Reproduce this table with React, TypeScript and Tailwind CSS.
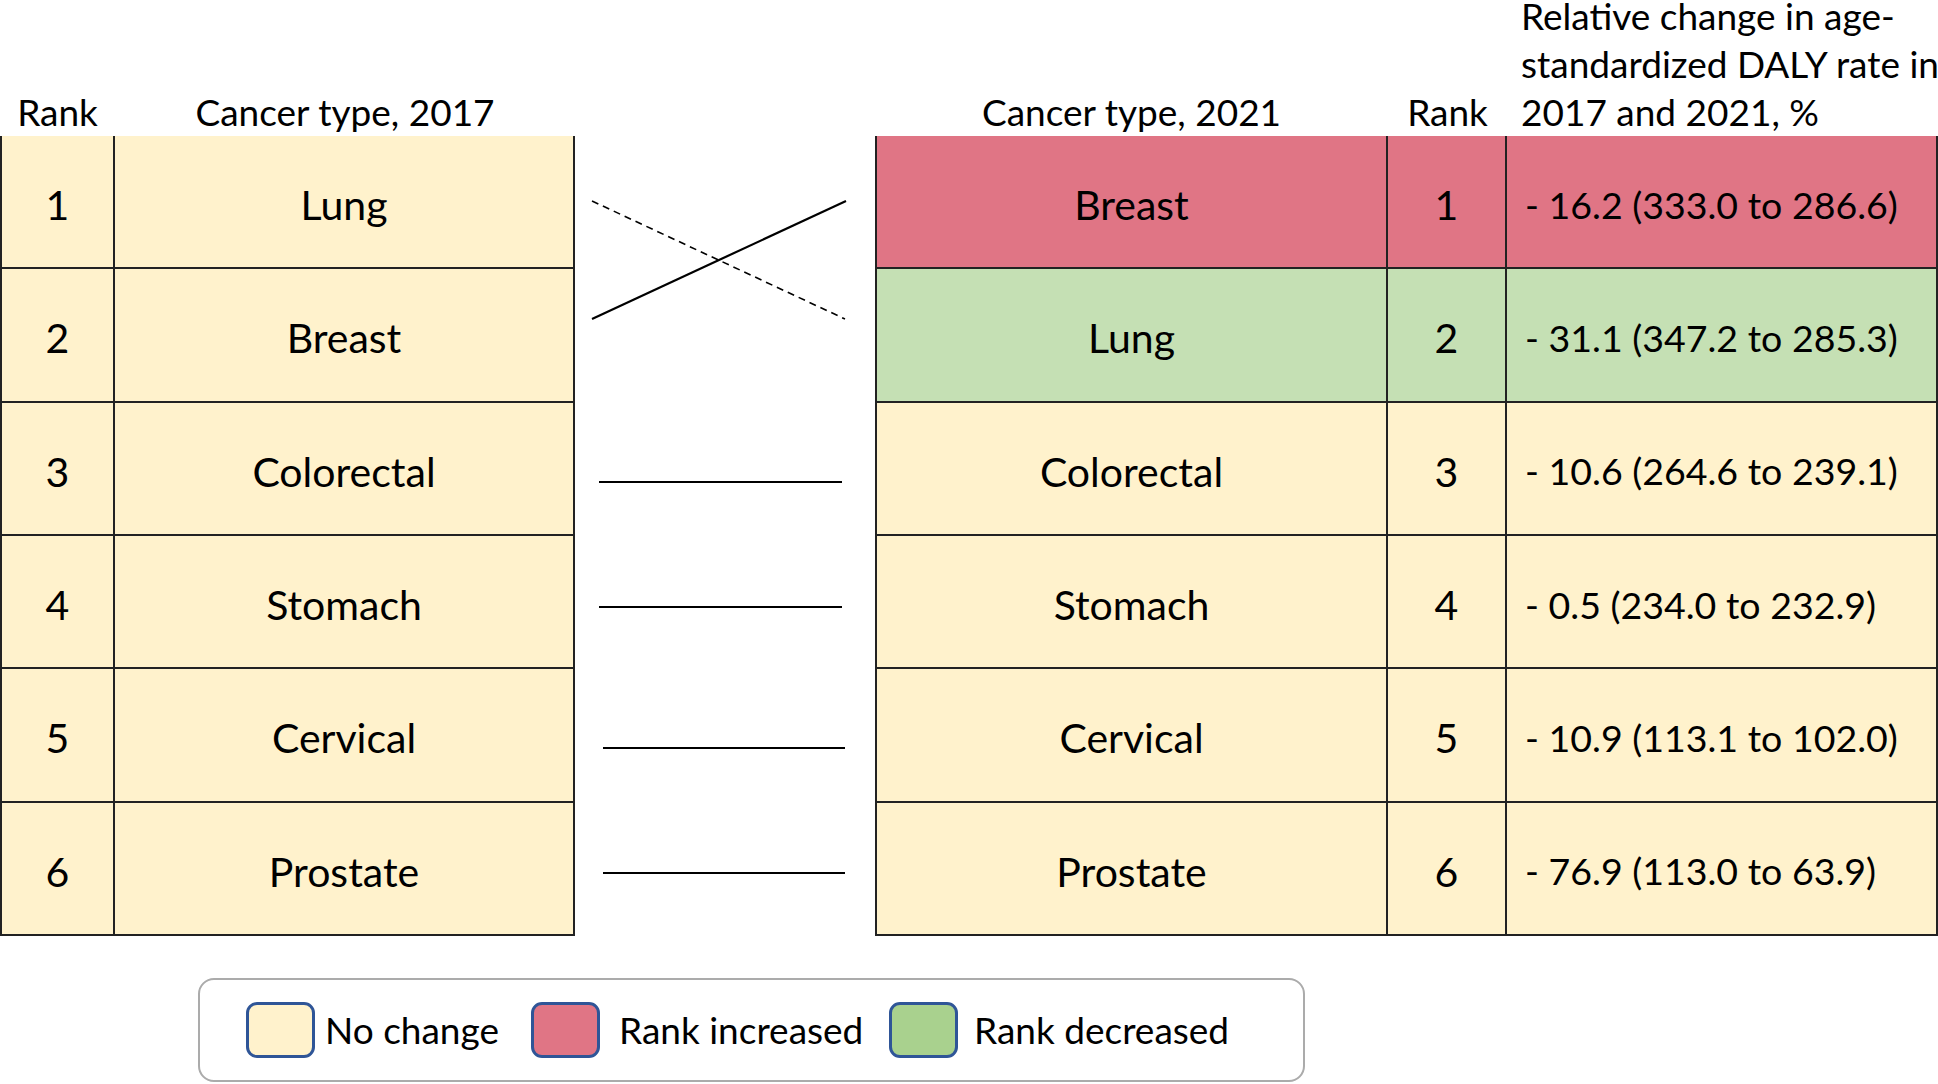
import React from "react";

const font = { fontFamily: "Lato, 'Open Sans', sans-serif" };

const left = [
  ["1", "Lung"],
  ["2", "Breast"],
  ["3", "Colorectal"],
  ["4", "Stomach"],
  ["5", "Cervical"],
  ["6", "Prostate"],
];

const right = [
  ["Breast", "1", "- 16.2 (333.0 to 286.6)", "bg-[#E07585]"],
  ["Lung", "2", "- 31.1 (347.2 to 285.3)", "bg-[#C5E0B4]"],
  ["Colorectal", "3", "- 10.6 (264.6 to 239.1)", "bg-[#FFF2CC]"],
  ["Stomach", "4", "- 0.5 (234.0 to 232.9)", "bg-[#FFF2CC]"],
  ["Cervical", "5", "- 10.9 (113.1 to 102.0)", "bg-[#FFF2CC]"],
  ["Prostate", "6", "- 76.9 (113.0 to 63.9)", "bg-[#FFF2CC]"],
];

function Swatch({ color }: { color: string }) {
  return (
    <div
      className={`w-[69px] h-[56px] shrink-0 rounded-[11px] border-[3px] border-[#2F5597] ${color}`}
    />
  );
}

export default function App() {
  return (
    <div
      className="w-[1938px] h-[1084px] overflow-hidden bg-white text-black flex flex-col"
      style={font}
    >
      {/* headers */}
      <div className="flex h-[136px] items-end text-[37px] leading-none">
        <div className="w-[115px] text-center pb-[6px]">Rank</div>
        <div className="w-[460px] text-center pb-[6px] whitespace-nowrap">Cancer type, 2017</div>
        <div className="w-[300px]" />
        <div className="w-[513px] text-center pb-[6px] whitespace-nowrap">Cancer type, 2021</div>
        <div className="w-[119px] text-center pb-[6px]">Rank</div>
        <div className="w-[431px] pl-[14px] leading-[48px] whitespace-nowrap">
          <div>Relative change in age-</div>
          <div>standardized DALY rate in</div>
          <div>2017 and 2021, %</div>
        </div>
      </div>

      {/* tables */}
      <div className="flex h-[800px]">
        <div className="w-[575px] grid grid-rows-6 border-l-2 border-[#222] text-[41px]">
          {left.map(([r, t]) => (
            <div key={r} className="flex bg-[#FFF2CC] border-b-2 border-[#222]">
              <div className="w-[113px] flex items-center justify-center pt-[6px] border-r-2 border-[#222]">
                {r}
              </div>
              <div className="flex-1 flex items-center justify-center pt-[6px] border-r-2 border-[#222]">
                {t}
              </div>
            </div>
          ))}
        </div>

        <div className="w-[300px] h-[800px]">
          <svg width="300" height="800" viewBox="0 0 300 800">
            <line x1="17" y1="65" x2="270" y2="183" stroke="#000" strokeWidth="1.6" strokeDasharray="7 5" />
            <line x1="17" y1="183" x2="271" y2="65" stroke="#000" strokeWidth="2.2" />
            <line x1="24" y1="346" x2="267" y2="346" stroke="#000" strokeWidth="2.2" />
            <line x1="24" y1="471" x2="267" y2="471" stroke="#000" strokeWidth="2.2" />
            <line x1="28" y1="612" x2="270" y2="612" stroke="#000" strokeWidth="2.2" />
            <line x1="28" y1="737" x2="270" y2="737" stroke="#000" strokeWidth="2.2" />
          </svg>
        </div>

        <div className="w-[1063px] grid grid-rows-6 border-l-2 border-[#222] text-[41px]">
          {right.map(([t, r, v, bg]) => (
            <div key={r} className={`flex border-b-2 border-[#222] ${bg}`}>
              <div className="w-[511px] flex items-center justify-center pt-[6px] border-r-2 border-[#222]">
                {t}
              </div>
              <div className="w-[119px] flex items-center justify-center pt-[6px] border-r-2 border-[#222]">
                {r}
              </div>
              <div className="flex-1 flex items-center pl-[18px] pt-[6px] text-[37.5px] border-r-2 border-[#222] whitespace-nowrap">
                {v}
              </div>
            </div>
          ))}
        </div>
      </div>

      {/* legend */}
      <div className="mt-[42px] ml-[198px] w-[1107px] h-[104px] border-2 border-[#ABABAB] rounded-[16px] flex items-center pl-[46px] text-[37px] whitespace-nowrap">
        <Swatch color="bg-[#FFF2CC]" />
        <span className="ml-[10px] w-[206px]">No change</span>
        <Swatch color="bg-[#E07585]" />
        <span className="ml-[19px] w-[270px]">Rank increased</span>
        <Swatch color="bg-[#A9D18E]" />
        <span className="ml-[16px]">Rank decreased</span>
      </div>
    </div>
  );
}
